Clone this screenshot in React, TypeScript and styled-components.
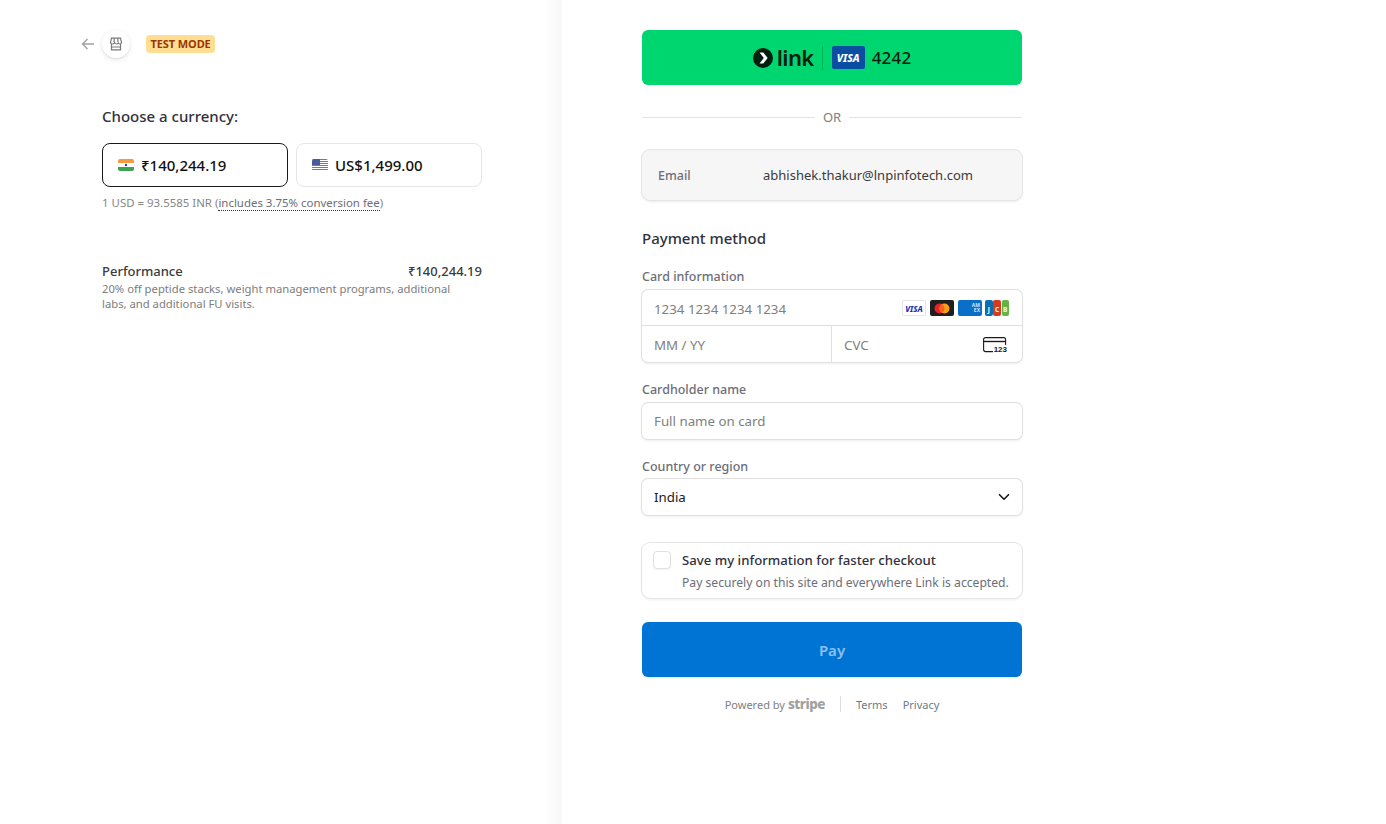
import React from 'react'
import styled, { createGlobalStyle } from 'styled-components'
import { ChevronDown } from 'lucide-react'

const FONT = `"Noto Sans", "Open Sans", "Liberation Sans", sans-serif`

const GlobalStyle = createGlobalStyle`
  html, body { margin: 0; padding: 0; height: 100%; background: #fff; }
  body { font-family: ${FONT}; color: #1a1a1a; overflow: hidden; }
  * { box-sizing: border-box; }
`

const Page = styled.div`
  display: flex;
  width: 100%;
  height: 824px;
`

const Summary = styled.section`
  width: 562px;
  flex: none;
  padding: 30px 80px 0 102px;
  background: linear-gradient(to right, #fff calc(100% - 18px), #f7f7f7);
`

const Checkout = styled.section`
  flex: 1;
  padding: 30px 0 0 80px;
`

const TopBar = styled.header`
  display: flex;
  align-items: center;
  height: 28px;
  position: relative;
`

const BackArrow = styled.svg`
  position: absolute;
  left: -21px;
  top: 7px;
  width: 14px;
  height: 14px;
`

const StoreBadge = styled.div`
  width: 28px;
  height: 28px;
  border-radius: 50%;
  background: #fff;
  box-shadow: 0 2px 5px rgba(50, 50, 93, 0.1), 0 1px 2px rgba(0, 0, 0, 0.07);
  display: flex;
  align-items: center;
  justify-content: center;
`

const TestMode = styled.span`
  margin: -1px 0 0 16px;
  background: #ffde92;
  color: #983705;
  font-size: 11px;
  font-weight: 700;
  line-height: 18px;
  height: 18px;
  padding: 0 4.5px;
  border-radius: 4px;
  letter-spacing: -0.1px;
`

const CurrencyTitle = styled.h2`
  margin: 45px 0 0;
  font-size: 15px;
  line-height: 26px;
  font-weight: 500;
  color: #30313d;
`

const CurrencyRow = styled.div`
  display: flex;
  gap: 8px;
  margin-top: 14px;
`

const CurrencyOption = styled.div<{ $selected?: boolean }>`
  flex: 1;
  height: 44px;
  display: flex;
  align-items: center;
  gap: 7px;
  padding-left: 15px;
  border-radius: 8px;
  border: 1px solid ${p => (p.$selected ? '#1a1a1a' : '#e6e6e6')};
  font-size: 15px;
  font-weight: 500;
  color: #111;
`

const FlagSvg = styled.svg`
  width: 16px;
  height: 12px;
  flex: none;
  border-radius: 2px;
`

const RateNote = styled.p`
  margin: 8px 0 0;
  font-size: 11.45px;
  line-height: 16px;
  color: #868686;
  white-space: nowrap;
`

const FeeLink = styled.span`
  color: #6d6e78;
  border-bottom: 1px dotted #30313d;
`

const LineItem = styled.div`
  margin-top: 51px;
`

const LineHead = styled.div`
  display: flex;
  justify-content: space-between;
  font-size: 13px;
  line-height: 18px;
  font-weight: 500;
  color: #3b3b3b;
`

const LineDesc = styled.p`
  margin: 1px 0 0;
  font-size: 11.25px;
  line-height: 15px;
  color: #7d7d7d;
  width: 360px;
`

const Column = styled.div`
  width: 380px;
`

const LinkButton = styled.div`
  height: 55px;
  border-radius: 6px;
  background: #00d66f;
  display: flex;
  align-items: center;
  justify-content: center;
  color: #011e0f;
`

const LinkWord = styled.span`
  font-size: 22px;
  line-height: 1;
  font-weight: 600;
  margin: -2px 0 0 4px;
  letter-spacing: -0.6px;
`

const LinkDivider = styled.span`
  width: 1px;
  height: 24px;
  background: rgba(1, 30, 15, 0.2);
  margin: 0 9px 0 8px;
`

const VisaTile = styled.span`
  width: 33px;
  height: 23px;
  border-radius: 2px;
  background: #0a4ea2;
  color: #fff;
  font-size: 10.5px;
  font-weight: 800;
  font-style: italic;
  display: flex;
  align-items: center;
  justify-content: center;
`

const LinkDigits = styled.span`
  margin-left: 7px;
  font-size: 17px;
  font-weight: 500;
  letter-spacing: 0.2px;
`

const OrDivider = styled.div`
  display: flex;
  align-items: center;
  gap: 8px;
  margin-top: 22px;
  height: 20px;
  font-size: 13px;
  color: #808080;

  &::before, &::after {
    content: '';
    flex: 1;
    height: 1px;
    background: #e3e3e3;
  }
`

const EmailBox = styled.div`
  margin-top: 23px;
  height: 50px;
  border-radius: 8px;
  background: #f6f6f6;
  box-shadow: 0 0 0 1px #e4e4e4, 0 2px 3px rgba(0, 0, 0, 0.07);
  display: flex;
  align-items: center;
  padding-left: 16px;
`

const EmailLabel = styled.span`
  width: 105px;
  font-size: 12.5px;
  font-weight: 500;
  color: #6d6e78;
`

const EmailValue = styled.span`
  font-size: 13px;
  color: #3a3a3a;
`

const SectionTitle = styled.h3`
  margin: 26px 0 0;
  font-size: 15px;
  line-height: 24px;
  font-weight: 500;
  color: #30313d;
`

const FieldLabel = styled.div<{ $top: number }>`
  margin-top: ${p => p.$top}px;
  font-size: 12.5px;
  line-height: 18px;
  font-weight: 500;
  color: #6d6e78;
`

const InputShell = styled.div`
  margin-top: 4px;
  border-radius: 6px;
  background: #fff;
  box-shadow: 0 0 0 1px #e0e0e0, 0 2px 3px rgba(0, 0, 0, 0.07);
`

const SingleInput = styled(InputShell)<{ $gap: number }>`
  margin-top: ${p => p.$gap}px;
  height: 36px;
  display: flex;
  align-items: center;
  justify-content: space-between;
  padding: 0 12px;
  font-size: 13.3px;
`

const CardRow = styled.div`
  height: 36px;
  display: flex;
  align-items: center;
  justify-content: space-between;
  padding: 3px 13px 0 12px;
  border-bottom: 1px solid #e0e0e0;
`

const CardSplit = styled.div`
  display: flex;
  height: 36px;
`

const CardCell = styled.div<{ $right?: boolean }>`
  flex: 0 0 50%;
  display: flex;
  align-items: center;
  justify-content: space-between;
  padding: 1px 12px 0;
  ${p => (p.$right ? 'padding-right: 15px;' : 'border-right: 1px solid #e0e0e0;')}
`

const Placeholder = styled.span`
  font-size: 13.3px;
  color: #808080;
`

const BrandRow = styled.div`
  display: flex;
  gap: 4px;
  margin-top: -2px;
`

const BrandTile = styled.span<{ $bg: string; $border?: boolean }>`
  width: 24px;
  height: 16px;
  border-radius: 2px;
  background: ${p => p.$bg};
  ${p => (p.$border ? 'box-shadow: inset 0 0 0 1px #e6e6e6;' : '')}
  display: flex;
  align-items: center;
  justify-content: center;
  flex: none;
  overflow: hidden;
`

const VisaMini = styled.span`
  font-size: 8px;
  font-weight: 800;
  font-style: italic;
  color: #1a2fb8;
`

const AmexMini = styled.span`
  font-size: 5px;
  line-height: 5px;
  font-weight: 700;
  color: #cfe6fa;
  text-align: right;
  width: 100%;
  padding-right: 2px;
`

const JcbBand = styled.span<{ $bg: string }>`
  width: 7.5px;
  height: 16px;
  border-radius: 2px;
  background: ${p => p.$bg};
  color: #fff;
  font-size: 6.5px;
  line-height: 7px;
  font-weight: 700;
  display: flex;
  align-items: center;
  justify-content: center;
  padding-top: 2px;
`

const JcbTile = styled.span`
  width: 24px;
  margin-left: -1px;
  display: flex;
  justify-content: space-between;
`

const CvcIcon = styled.span`
  position: relative;
  width: 24px;
  height: 16px;
  display: block;
  margin-top: -1px;
`

const CvcDigits = styled.span`
  position: absolute;
  right: 0;
  bottom: -2px;
  background: #fff;
  padding-left: 1px;
  font-family: "Liberation Sans", sans-serif;
  font-size: 8px;
  line-height: 9px;
  font-weight: 700;
  color: #1a1a1a;
`

const SaveBox = styled.div`
  margin-top: 28px;
  height: 55px;
  border-radius: 8px;
  box-shadow: 0 0 0 1px #e4e4e4, 0 2px 3px rgba(0, 0, 0, 0.06);
  display: flex;
  padding: 8px 0 0 11px;
`

const CheckBox = styled.span`
  width: 18px;
  height: 18px;
  border-radius: 4px;
  border: 1px solid #e0e0e0;
  box-shadow: 0 1px 2px rgba(0, 0, 0, 0.06);
  flex: none;
  margin-right: 11px;
`

const SaveTitle = styled.div`
  font-size: 13.2px;
  line-height: 18px;
  font-weight: 500;
  color: #30313d;
`

const SaveHint = styled.div`
  margin-top: 6px;
  font-size: 12.15px;
  line-height: 16px;
  color: #6d6e78;
  white-space: nowrap;
`

const PayButton = styled.div`
  margin-top: 24px;
  height: 55px;
  border-radius: 6px;
  background: #0074d4;
  box-shadow: 0 1px 2px rgba(0, 0, 0, 0.1);
  color: #8dc0ec;
  font-size: 15px;
  font-weight: 600;
  display: flex;
  align-items: center;
  justify-content: center;
`

const FooterBar = styled.footer`
  display: flex;
  align-items: center;
  justify-content: center;
  margin-top: 18px;
  height: 18px;
  font-size: 11px;
  color: #808080;
`

const StripeWord = styled.span`
  font-size: 13.5px;
  font-weight: 800;
  color: #a0a0a0;
  margin-left: 3px;
  letter-spacing: -0.5px;
`

const FooterRule = styled.span`
  width: 1px;
  height: 16px;
  background: #dcdcdc;
  margin: 0 15px;
`

const FooterLink = styled.span`
  color: #6d7a8a;
  & + & { margin-left: 15px; }
`

const SelectChevron = styled(ChevronDown)`
  margin-right: -3px;
`

function IndiaFlag() {
  return (
    <FlagSvg viewBox="0 0 16 12">
      <rect width="16" height="4" fill="#f59a42" />
      <rect y="4" width="16" height="4" fill="#fff" />
      <rect y="8" width="16" height="4" fill="#3fa34d" />
      <circle cx="8" cy="6" r="1.2" fill="#27408b" />
    </FlagSvg>
  )
}

function UsFlag() {
  return (
    <FlagSvg viewBox="0 0 16 12">
      <rect width="16" height="12" fill="#fff" />
      {[0, 2, 4, 6, 8, 10].map(y => (
        <rect key={y} y={y} width="16" height="1" fill="#d8525c" />
      ))}
      <rect width="8" height="6" fill="#4a5a9e" />
    </FlagSvg>
  )
}

function StoreIcon() {
  return (
    <svg width="14" height="14" viewBox="0 0 14 14" fill="none" stroke="#7a7a7a" strokeWidth="1.2">
      <path d="M2.500 1.200h9l1 4.300c0 1-.7 1.500-1.500 1.500s-1.500-.5-1.700-1.500c-.2 1-1 1.500-1.800 1.500S6 6.500 5.500 5.500C5.300 6.500 4.500 7 3.500 7S1.500 6.500 1.500 5.500z" />
      <path d="M2.500 7v5.800h9V7M5.200 1.200l-.2 4M8.800 1.200l.2 4M2.500 10h9" />
    </svg>
  )
}

function LinkMark() {
  return (
    <svg width="20" height="20" viewBox="0 0 20 20">
      <circle cx="10" cy="10" r="10" fill="#011e0f" />
      <path d="M6.500 4.500h3.800l4.400 5.500-4.400 5.500H6.500l4.300-5.500z" fill="#fff" />
    </svg>
  )
}

function MastercardIcon() {
  return (
    <BrandTile $bg="#1f1f1f">
      <svg width="16" height="11" viewBox="0 0 16 11">
        <circle cx="5.500" cy="5.500" r="5" fill="#e8222b" />
        <circle cx="10.500" cy="5.500" r="5" fill="#f79e1b" />
        <path d="M8 1.200a5 5 0 0 1 0 8.600 5 5 0 0 1 0-8.600z" fill="#f2641f" />
      </svg>
    </BrandTile>
  )
}

export default function App() {
  return (
    <>
      <GlobalStyle />
      <Page>
        <Summary>
          <TopBar>
            <BackArrow viewBox="0 0 14 14" fill="none" stroke="#a3a3a3" strokeWidth="1.4">
              <path d="M13 7H1.500M6.500 2 1.500 7l5 5" />
            </BackArrow>
            <StoreBadge>
              <StoreIcon />
            </StoreBadge>
            <TestMode>TEST MODE</TestMode>
          </TopBar>
          <CurrencyTitle>Choose a currency:</CurrencyTitle>
          <CurrencyRow>
            <CurrencyOption $selected>
              <IndiaFlag />₹140,244.19
            </CurrencyOption>
            <CurrencyOption>
              <UsFlag />US$1,499.00
            </CurrencyOption>
          </CurrencyRow>
          <RateNote>
            1 USD = 93.5585 INR (<FeeLink>includes 3.75% conversion fee</FeeLink>)
          </RateNote>
          <LineItem>
            <LineHead>
              <span>Performance</span>
              <span>₹140,244.19</span>
            </LineHead>
            <LineDesc>
              20% off peptide stacks, weight management programs, additional labs, and additional FU visits.
            </LineDesc>
          </LineItem>
        </Summary>

        <Checkout>
          <Column>
            <LinkButton>
              <LinkMark />
              <LinkWord>link</LinkWord>
              <LinkDivider />
              <VisaTile>VISA</VisaTile>
              <LinkDigits>4242</LinkDigits>
            </LinkButton>
            <OrDivider>OR</OrDivider>
            <EmailBox>
              <EmailLabel>Email</EmailLabel>
              <EmailValue>abhishek.thakur@lnpinfotech.com</EmailValue>
            </EmailBox>

            <SectionTitle>Payment method</SectionTitle>

            <FieldLabel $top={18}>Card information</FieldLabel>
            <InputShell>
              <CardRow>
                <Placeholder>1234 1234 1234 1234</Placeholder>
                <BrandRow>
                  <BrandTile $bg="#fff" $border>
                    <VisaMini>VISA</VisaMini>
                  </BrandTile>
                  <MastercardIcon />
                  <BrandTile $bg="#0a6fc9">
                    <AmexMini>AM<br />EX</AmexMini>
                  </BrandTile>
                  <JcbTile>
                    <JcbBand $bg="#0b6fae">J</JcbBand>
                    <JcbBand $bg="#d9391f">C</JcbBand>
                    <JcbBand $bg="#63b345">B</JcbBand>
                  </JcbTile>
                </BrandRow>
              </CardRow>
              <CardSplit>
                <CardCell>
                  <Placeholder>MM / YY</Placeholder>
                </CardCell>
                <CardCell $right>
                  <Placeholder>CVC</Placeholder>
                  <CvcIcon>
                    <svg width="24" height="16" viewBox="0 0 24 16" fill="none" stroke="#1a1a1a" strokeWidth="1.100">
                      <rect x="0.600" y="0.600" width="22" height="14" rx="2" />
                      <path d="M0.600 4.500h22" strokeWidth="1.400" />
                    </svg>
                    <CvcDigits>123</CvcDigits>
                  </CvcIcon>
                </CardCell>
              </CardSplit>
            </InputShell>

            <FieldLabel $top={19}>Cardholder name</FieldLabel>
            <SingleInput $gap={4}>
              <Placeholder>Full name on card</Placeholder>
            </SingleInput>

            <FieldLabel $top={19}>Country or region</FieldLabel>
            <SingleInput $gap={3}>
              <span>India</span>
              <SelectChevron size={18} color="#1a1a1a" strokeWidth={2.200} />
            </SingleInput>

            <SaveBox>
              <CheckBox />
              <div>
                <SaveTitle>Save my information for faster checkout</SaveTitle>
                <SaveHint>Pay securely on this site and everywhere Link is accepted.</SaveHint>
              </div>
            </SaveBox>

            <PayButton>Pay</PayButton>

            <FooterBar>
              Powered by<StripeWord>stripe</StripeWord>
              <FooterRule />
              <FooterLink>Terms</FooterLink>
              <FooterLink>Privacy</FooterLink>
            </FooterBar>
          </Column>
        </Checkout>
      </Page>
    </>
  )
}
